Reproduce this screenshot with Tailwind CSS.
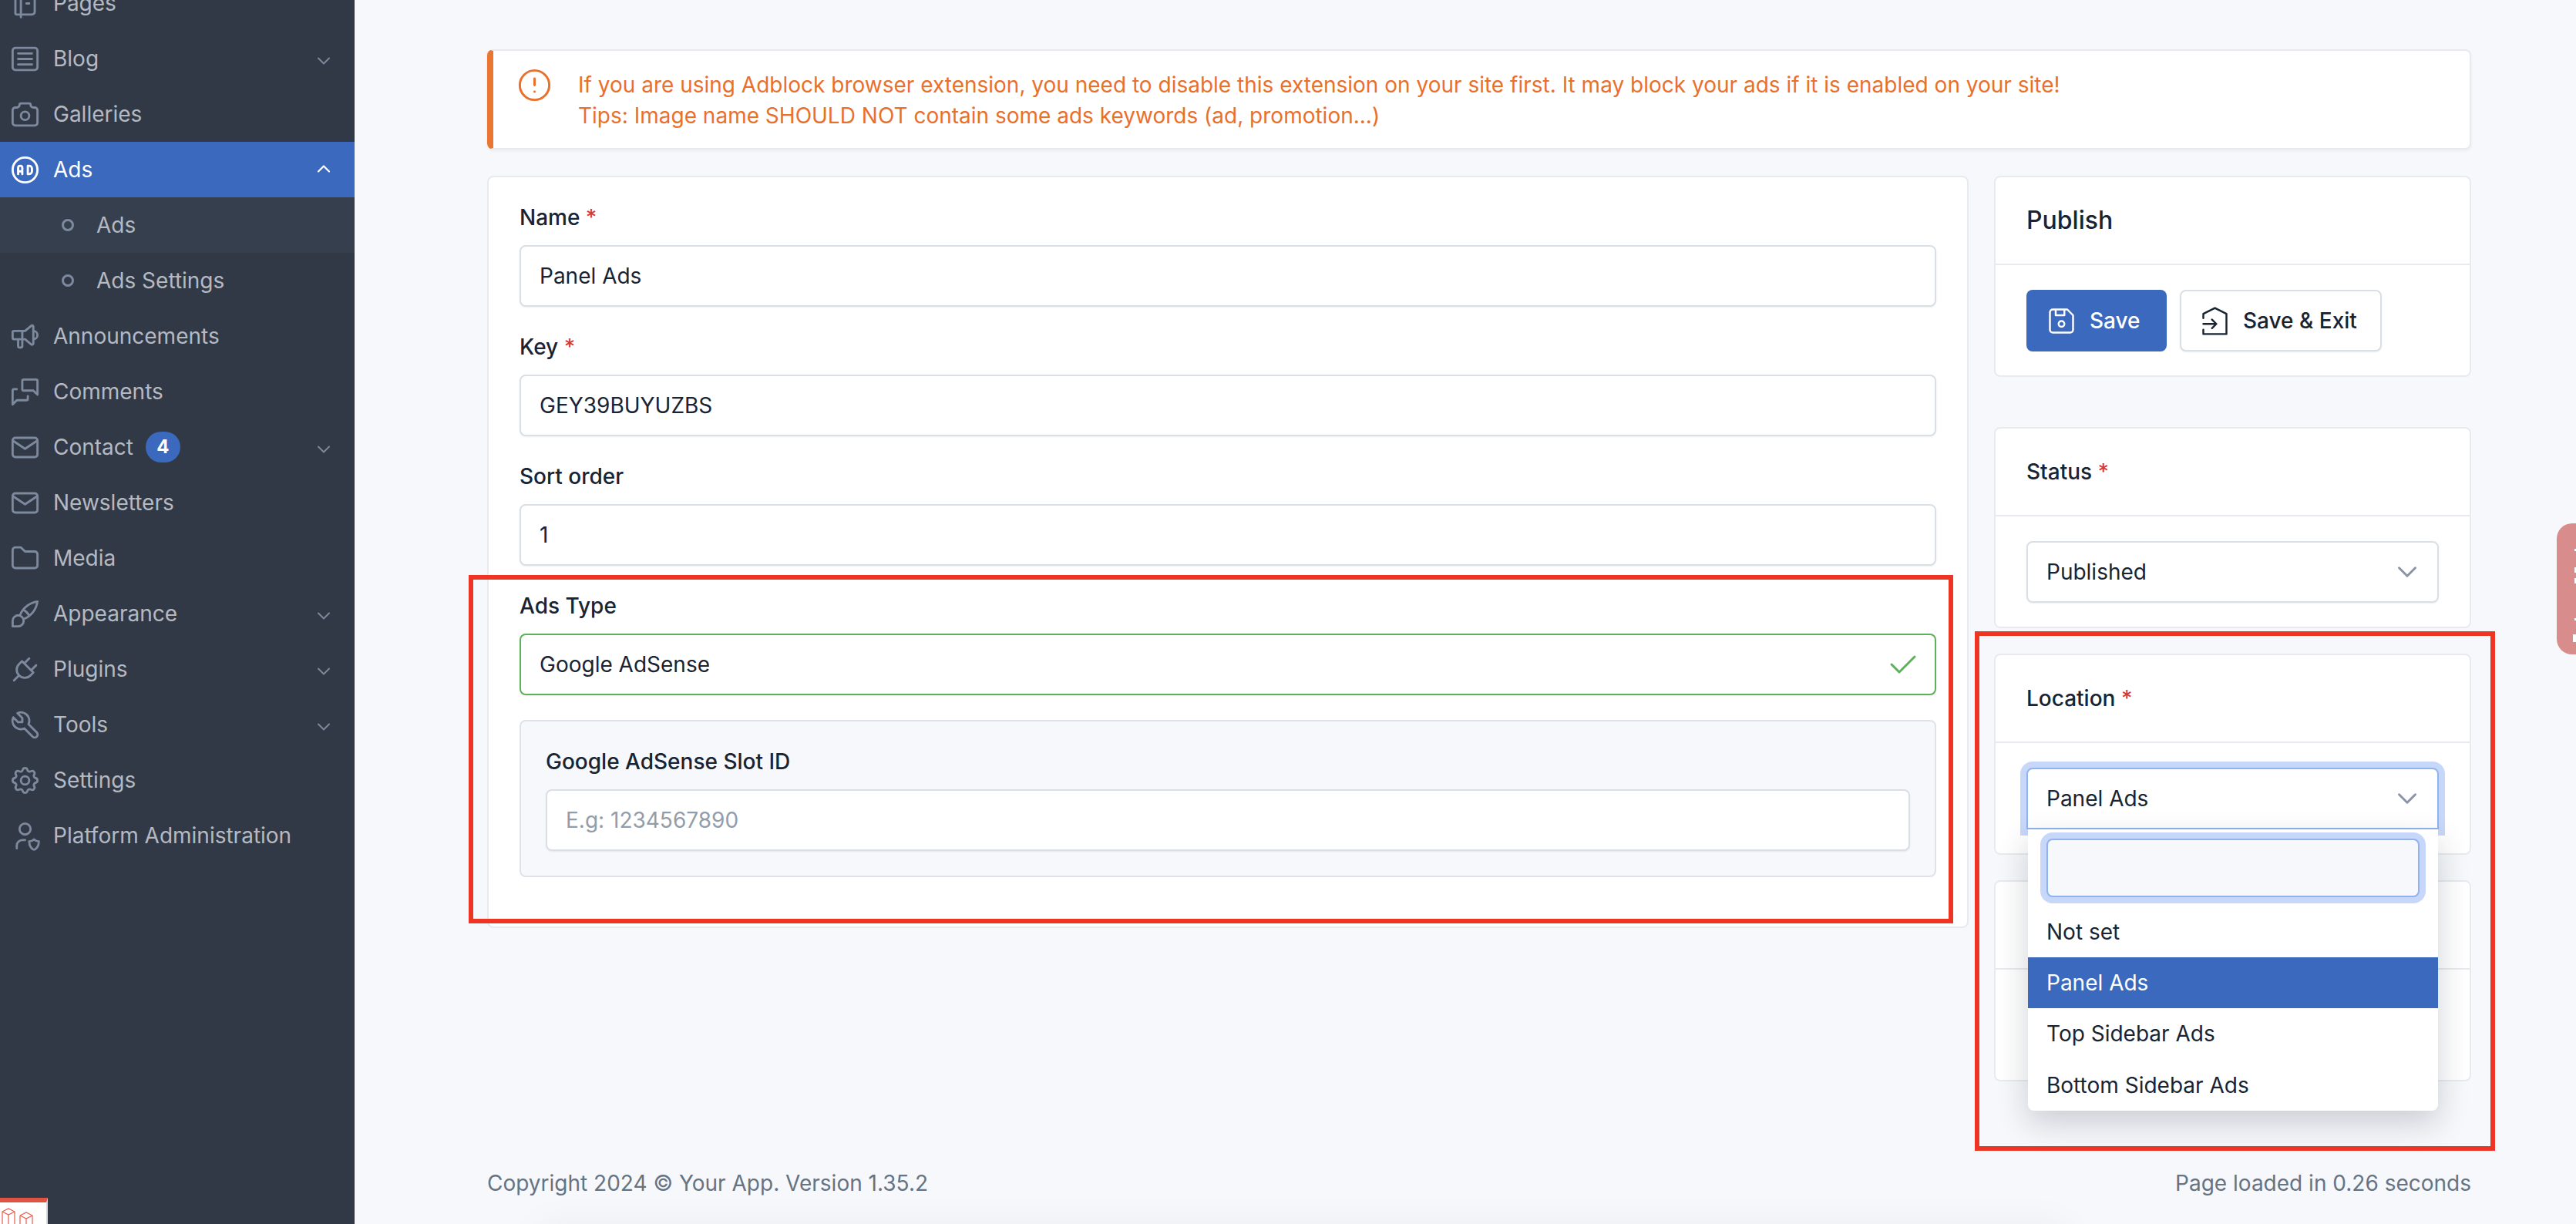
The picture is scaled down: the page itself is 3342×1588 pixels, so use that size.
<!DOCTYPE html>
<html lang="en">
<head>
  <meta charset="UTF-8" />
  <title>Ads</title>
  <script src="https://cdn.jsdelivr.net/npm/@tailwindcss/browser@4"></script>
</head>
<body class="bg-[#f6f8fb]">
<div class="relative flex w-[3342px] h-[1588px] overflow-hidden font-[Inter,sans-serif] text-[28px] leading-[40px] text-[#182433]">

  <!-- Sidebar -->
  <aside class="w-[460px] shrink-0 bg-[#313947] text-[#b5b9c1]">
    <nav class="-mt-[32px] flex flex-col">
      <a class="flex items-center h-[72px] pl-[11px] gap-[15px]">
        <svg class="w-[43px] h-[43px] shrink-0 text-[#7d899d]" viewBox="0 0 24 24" fill="none" stroke="currentColor" stroke-width="1.6" stroke-linecap="round" stroke-linejoin="round"><path d="M6 4h11a2 2 0 0 1 2 2v12a2 2 0 0 1 -2 2h-11a1 1 0 0 1 -1 -1v-14a1 1 0 0 1 1 -1m3 0v18M13 8l2 0M13 12l2 0"/></svg>
        <span>Pages</span>
      </a>
      <a class="flex items-center h-[72px] pl-[11px] gap-[15px]">
        <svg class="w-[43px] h-[43px] shrink-0 text-[#7d899d]" viewBox="0 0 24 24" fill="none" stroke="currentColor" stroke-width="1.6" stroke-linecap="round" stroke-linejoin="round"><path d="M3 6a2 2 0 0 1 2 -2h14a2 2 0 0 1 2 2v12a2 2 0 0 1 -2 2h-14a2 2 0 0 1 -2 -2zM7 8h10M7 12h10M7 16h10"/></svg>
        <span>Blog</span>
        <svg class="ml-auto mr-[26px] mt-[6px] w-[28px] h-[28px] text-[#7d899d]" viewBox="0 0 24 24" fill="none" stroke="currentColor" stroke-width="1.7" stroke-linecap="round" stroke-linejoin="round"><path d="M6 9l6 6l6 -6"/></svg>
      </a>
      <a class="flex items-center h-[72px] pl-[11px] gap-[15px]">
        <svg class="w-[43px] h-[43px] shrink-0 text-[#7d899d]" viewBox="0 0 24 24" fill="none" stroke="currentColor" stroke-width="1.6" stroke-linecap="round" stroke-linejoin="round"><path d="M5 7h1a2 2 0 0 0 2 -2a1 1 0 0 1 1 -1h6a1 1 0 0 1 1 1a2 2 0 0 0 2 2h1a2 2 0 0 1 2 2v9a2 2 0 0 1 -2 2h-14a2 2 0 0 1 -2 -2v-9a2 2 0 0 1 2 -2M9 13a3 3 0 1 0 6 0a3 3 0 0 0 -6 0"/></svg>
        <span>Galleries</span>
      </a>
      <a class="flex items-center h-[72px] pl-[11px] gap-[15px] bg-[#3a69bd] text-white">
        <svg class="w-[43px] h-[43px] shrink-0" viewBox="0 0 24 24" fill="none" stroke="currentColor" stroke-width="1.6" stroke-linecap="round" stroke-linejoin="round"><path d="M3 12a9 9 0 1 0 18 0a9 9 0 1 0 -18 0M7 15v-4.5a1.5 1.5 0 0 1 3 0v4.5M7 13h3M14 9v6h1a2 2 0 0 0 2 -2v-2a2 2 0 0 0 -2 -2h-1"/></svg>
        <span>Ads</span>
        <svg class="ml-auto mr-[26px] -mt-[3px] w-[28px] h-[28px]" viewBox="0 0 24 24" fill="none" stroke="currentColor" stroke-width="1.9" stroke-linecap="round" stroke-linejoin="round"><path d="M6 15l6 -6l6 6"/></svg>
      </a>
      <a class="flex items-center h-[72px] pl-[80px] gap-[29px] bg-[#363f4e]">
        <span class="w-[16px] h-[16px] rounded-full border-[3px] border-[#7d899d]"></span>
        <span>Ads</span>
      </a>
      <a class="flex items-center h-[72px] pl-[80px] gap-[29px]">
        <span class="w-[16px] h-[16px] rounded-full border-[3px] border-[#7d899d]"></span>
        <span>Ads Settings</span>
      </a>
      <a class="flex items-center h-[72px] pl-[11px] gap-[15px]">
        <svg class="w-[43px] h-[43px] shrink-0 text-[#7d899d]" viewBox="0 0 24 24" fill="none" stroke="currentColor" stroke-width="1.6" stroke-linecap="round" stroke-linejoin="round"><path d="M18 8a3 3 0 0 1 0 6M10 8v11a1 1 0 0 1 -1 1h-1a1 1 0 0 1 -1 -1v-5M12 8h0l4.524 -3.77a.9 .9 0 0 1 1.476 .692v12.156a.9 .9 0 0 1 -1.476 .692l-4.524 -3.77h-8a1 1 0 0 1 -1 -1v-4a1 1 0 0 1 1 -1h8"/></svg>
        <span>Announcements</span>
      </a>
      <a class="flex items-center h-[72px] pl-[11px] gap-[15px]">
        <svg class="w-[43px] h-[43px] shrink-0 text-[#7d899d]" viewBox="0 0 24 24" fill="none" stroke="currentColor" stroke-width="1.6" stroke-linecap="round" stroke-linejoin="round"><path d="M21 14l-3 -3h-7a1 1 0 0 1 -1 -1v-6a1 1 0 0 1 1 -1h9a1 1 0 0 1 1 1v10M14 15v2a1 1 0 0 1 -1 1h-7l-3 3v-10a1 1 0 0 1 1 -1h2"/></svg>
        <span>Comments</span>
      </a>
      <a class="flex items-center h-[72px] pl-[11px] gap-[15px]">
        <svg class="w-[43px] h-[43px] shrink-0 text-[#7d899d]" viewBox="0 0 24 24" fill="none" stroke="currentColor" stroke-width="1.6" stroke-linecap="round" stroke-linejoin="round"><path d="M3 7a2 2 0 0 1 2 -2h14a2 2 0 0 1 2 2v10a2 2 0 0 1 -2 2h-14a2 2 0 0 1 -2 -2zM3 7l9 6l9 -6"/></svg>
        <span>Contact</span>
        <span class="ml-[1px] w-[45px] h-[40px] rounded-full bg-[#3a69bd] text-white text-[24px] font-bold flex items-center justify-center">4</span>
        <svg class="ml-auto mr-[26px] mt-[6px] w-[28px] h-[28px] text-[#7d899d]" viewBox="0 0 24 24" fill="none" stroke="currentColor" stroke-width="1.7" stroke-linecap="round" stroke-linejoin="round"><path d="M6 9l6 6l6 -6"/></svg>
      </a>
      <a class="flex items-center h-[72px] pl-[11px] gap-[15px]">
        <svg class="w-[43px] h-[43px] shrink-0 text-[#7d899d]" viewBox="0 0 24 24" fill="none" stroke="currentColor" stroke-width="1.6" stroke-linecap="round" stroke-linejoin="round"><path d="M3 7a2 2 0 0 1 2 -2h14a2 2 0 0 1 2 2v10a2 2 0 0 1 -2 2h-14a2 2 0 0 1 -2 -2zM3 7l9 6l9 -6"/></svg>
        <span>Newsletters</span>
      </a>
      <a class="flex items-center h-[72px] pl-[11px] gap-[15px]">
        <svg class="w-[43px] h-[43px] shrink-0 text-[#7d899d]" viewBox="0 0 24 24" fill="none" stroke="currentColor" stroke-width="1.6" stroke-linecap="round" stroke-linejoin="round"><path d="M5 4h4l3 3h7a2 2 0 0 1 2 2v8a2 2 0 0 1 -2 2h-14a2 2 0 0 1 -2 -2v-11a2 2 0 0 1 2 -2"/></svg>
        <span>Media</span>
      </a>
      <a class="flex items-center h-[72px] pl-[11px] gap-[15px]">
        <svg class="w-[43px] h-[43px] shrink-0 text-[#7d899d]" viewBox="0 0 24 24" fill="none" stroke="currentColor" stroke-width="1.6" stroke-linecap="round" stroke-linejoin="round"><path d="M3 21v-4a4 4 0 1 1 4 4h-4M21 3a16 16 0 0 0 -12.8 10.2M21 3a16 16 0 0 1 -10.2 12.8M10.6 9a9 9 0 0 1 4.4 4.4"/></svg>
        <span>Appearance</span>
        <svg class="ml-auto mr-[26px] mt-[6px] w-[28px] h-[28px] text-[#7d899d]" viewBox="0 0 24 24" fill="none" stroke="currentColor" stroke-width="1.7" stroke-linecap="round" stroke-linejoin="round"><path d="M6 9l6 6l6 -6"/></svg>
      </a>
      <a class="flex items-center h-[72px] pl-[11px] gap-[15px]">
        <svg class="w-[43px] h-[43px] shrink-0 text-[#7d899d]" viewBox="0 0 24 24" fill="none" stroke="currentColor" stroke-width="1.6" stroke-linecap="round" stroke-linejoin="round"><path d="M9.785 6l8.215 8.215l-2.054 2.054a5.81 5.81 0 1 1 -8.215 -8.215l2.054 -2.054zM4 20l3.5 -3.5M15 4l-3.5 3.5M20 9l-3.5 3.5"/></svg>
        <span>Plugins</span>
        <svg class="ml-auto mr-[26px] mt-[6px] w-[28px] h-[28px] text-[#7d899d]" viewBox="0 0 24 24" fill="none" stroke="currentColor" stroke-width="1.7" stroke-linecap="round" stroke-linejoin="round"><path d="M6 9l6 6l6 -6"/></svg>
      </a>
      <a class="flex items-center h-[72px] pl-[11px] gap-[15px]">
        <svg class="w-[43px] h-[43px] shrink-0 text-[#7d899d]" viewBox="0 0 24 24" fill="none" stroke="currentColor" stroke-width="1.6" stroke-linecap="round" stroke-linejoin="round"><path d="M7 10h3v-3l-3.5 -3.5a6 6 0 0 1 8 8l6 6a2 2 0 0 1 -3 3l-6 -6a6 6 0 0 1 -8 -8l3.5 3.5"/></svg>
        <span>Tools</span>
        <svg class="ml-auto mr-[26px] mt-[6px] w-[28px] h-[28px] text-[#7d899d]" viewBox="0 0 24 24" fill="none" stroke="currentColor" stroke-width="1.7" stroke-linecap="round" stroke-linejoin="round"><path d="M6 9l6 6l6 -6"/></svg>
      </a>
      <a class="flex items-center h-[72px] pl-[11px] gap-[15px]">
        <svg class="w-[43px] h-[43px] shrink-0 text-[#7d899d]" viewBox="0 0 24 24" fill="none" stroke="currentColor" stroke-width="1.6" stroke-linecap="round" stroke-linejoin="round"><path d="M10.325 4.317c.426 -1.756 2.924 -1.756 3.35 0a1.724 1.724 0 0 0 2.573 1.066c1.543 -.94 3.31 .826 2.37 2.37a1.724 1.724 0 0 0 1.065 2.572c1.756 .426 1.756 2.924 0 3.35a1.724 1.724 0 0 0 -1.066 2.573c.94 1.543 -.826 3.31 -2.37 2.37a1.724 1.724 0 0 0 -2.572 1.065c-.426 1.756 -2.924 1.756 -3.35 0a1.724 1.724 0 0 0 -2.573 -1.066c-1.543 .94 -3.31 -.826 -2.37 -2.37a1.724 1.724 0 0 0 -1.065 -2.572c-1.756 -.426 -1.756 -2.924 0 -3.35a1.724 1.724 0 0 0 1.066 -2.573c-.94 -1.543 .826 -3.31 2.37 -2.37c1 .608 2.296 .07 2.572 -1.065zM9 12a3 3 0 1 0 6 0a3 3 0 0 0 -6 0"/></svg>
        <span>Settings</span>
      </a>
      <a class="flex items-center h-[72px] pl-[11px] gap-[15px]">
        <svg class="w-[43px] h-[43px] shrink-0 text-[#7d899d]" viewBox="0 0 24 24" fill="none" stroke="currentColor" stroke-width="1.6" stroke-linecap="round" stroke-linejoin="round"><path d="M6 21v-2a4 4 0 0 1 4 -4h2M22 16c0 4 -2.5 6 -3.5 6s-3.5 -2 -3.5 -6c1 0 2.5 -.5 3.5 -1.5c1 1 2.5 1.5 3.5 1.5zM8 7a4 4 0 1 0 8 0a4 4 0 0 0 -8 0"/></svg>
        <span>Platform Administration</span>
      </a>
    </nav>
  </aside>

  <!-- Main -->
  <main class="flex-1 flex flex-col pl-[172px] pr-[136px] pt-[64px]">
    <!-- Alert -->
    <div class="flex h-[130px] mb-[34px] bg-white border-2 border-[#e8eaef] border-l-[8px] border-l-[#ea7631] rounded-lg shadow-[0_2px_4px_rgba(24,36,51,.05)] text-[#e9702b]">
      <svg class="ml-[28px] mt-[19px] w-[51px] h-[51px] shrink-0" viewBox="0 0 24 24" fill="none" stroke="currentColor" stroke-width="1.4" stroke-linecap="round" stroke-linejoin="round"><path d="M3 12a9 9 0 1 0 18 0a9 9 0 0 0 -18 0M12 8v4M12 16h.01"/></svg>
      <p class="ml-[31px] pt-[24px]">If you are using Adblock browser extension, you need to disable this extension on your site first. It may block your ads if it is enabled on your site!<br>Tips: Image name SHOULD NOT contain some ads keywords (ad, promotion...)</p>
    </div>

    <div class="flex gap-[33px] items-start">
      <!-- Form card -->
      <section class="w-[1922px] bg-white border-2 border-[#e8eaef] rounded-lg px-[40px] pt-[32px] pb-[32px]">
        <label class="block font-medium h-[40px] mb-[16px]">Name <span class="text-[#d63939]">*</span></label>
        <input class="block w-full h-[80px] mb-[32px] px-[24px] border-2 border-[#dadfe5] rounded-lg shadow-[0_1px_2px_rgba(24,36,51,.08)] bg-white" value="Panel Ads">
        <label class="block font-medium h-[40px] mb-[16px]">Key <span class="text-[#d63939]">*</span></label>
        <input class="block w-full h-[80px] mb-[32px] px-[24px] border-2 border-[#dadfe5] rounded-lg shadow-[0_1px_2px_rgba(24,36,51,.08)] bg-white" value="GEY39BUYUZBS">
        <label class="block font-medium h-[40px] mb-[16px]">Sort order</label>
        <input class="block w-full h-[80px] mb-[32px] px-[24px] border-2 border-[#dadfe5] rounded-lg shadow-[0_1px_2px_rgba(24,36,51,.08)] bg-white" value="1">
        <label class="block font-medium h-[40px] mb-[16px]">Ads Type</label>
        <div class="flex items-center justify-between h-[80px] mb-[32px] pl-[24px] pr-[18px] border-2 border-[#5eb15a] rounded-lg bg-white shadow-[0_1px_2px_rgba(24,36,51,.08)]">
          <span>Google AdSense</span>
          <svg class="w-[48px] h-[48px] text-[#5eb15a]" viewBox="0 0 24 24" fill="none" stroke="currentColor" stroke-width="1.5" stroke-linecap="round" stroke-linejoin="round"><path d="M5 12l5 5l10 -10"/></svg>
        </div>
        <div class="mb-[32px] p-[32px] bg-[#f6f8fb] border-2 border-[#dfe3e9] rounded-lg">
          <label class="block font-medium h-[40px] mb-[16px]">Google AdSense Slot ID</label>
          <input class="block w-full h-[80px] px-[24px] border-2 border-[#dadfe5] rounded-lg shadow-[0_1px_2px_rgba(24,36,51,.08)] bg-white placeholder:text-[#929dab]" placeholder="E.g: 1234567890">
        </div>
      </section>

      <!-- Right column -->
      <div class="w-[619px] flex flex-col">
        <section class="bg-white border-2 border-[#e8eaef] rounded-lg mb-[65px]">
          <div class="h-[114px] flex items-center px-[40px] border-b-2 border-[#e8eaef] text-[32px] font-medium">Publish</div>
          <div class="flex gap-[17px] px-[40px] pt-[32px] pb-[31px]">
            <button class="flex items-center h-[80px] w-[182px] pl-[23px] gap-[14px] rounded-lg bg-[#3a69bd] text-white font-medium">
              <svg class="w-[45px] h-[45px] shrink-0" viewBox="0 0 24 24" fill="none" stroke="currentColor" stroke-width="1.3" stroke-linecap="round" stroke-linejoin="round"><path d="M6 4h10l4 4v10a2 2 0 0 1 -2 2h-12a2 2 0 0 1 -2 -2v-12a2 2 0 0 1 2 -2M10 14a2 2 0 1 0 4 0a2 2 0 1 0 -4 0M14 4l0 4l-6 0l0 -4"/></svg>
              <span>Save</span>
            </button>
            <button class="flex items-center h-[80px] w-[262px] pl-[21px] gap-[14px] rounded-lg bg-white border-2 border-[#dadfe5] shadow-[0_1px_2px_rgba(24,36,51,.08)] font-medium">
              <svg class="w-[45px] h-[45px] shrink-0" viewBox="0 0 24 24" fill="none" stroke="currentColor" stroke-width="1.3" stroke-linecap="round" stroke-linejoin="round"><path d="M4 18v3h16v-14l-8 -4l-8 4v3M4 14h9M10 11l3 3l-3 3"/></svg>
              <span>Save &amp; Exit</span>
            </button>
          </div>
        </section>

        <section class="bg-white border-2 border-[#e8eaef] rounded-lg mb-[33px]">
          <div class="h-[114px] flex items-center px-[40px] border-b-2 border-[#e8eaef] font-medium"><span>Status <span class="text-[#d63939]">*</span></span></div>
          <div class="px-[40px] pt-[32px] pb-[31px]">
            <div class="flex items-center justify-between h-[80px] pl-[24px] pr-[18px] border-2 border-[#dadfe5] rounded-lg shadow-[0_1px_2px_rgba(24,36,51,.08)]">
              <span>Published</span>
              <svg class="w-[42px] h-[42px] text-[#8a94a6]" viewBox="0 0 24 24" fill="none" stroke="currentColor" stroke-width="1.7" stroke-linecap="round" stroke-linejoin="round"><path d="M6 9l6 6l6 -6"/></svg>
            </div>
          </div>
        </section>

        <section class="bg-white border-2 border-[#e8eaef] rounded-lg mb-[33px]">
          <div class="h-[114px] flex items-center px-[40px] border-b-2 border-[#e8eaef] font-medium"><span>Location <span class="text-[#d63939]">*</span></span></div>
          <div class="px-[40px] pt-[32px] pb-[31px]">
            <div class="relative">
              <div class="flex items-center justify-between h-[80px] pl-[24px] pr-[18px] border-2 border-[#8fb3ef] rounded-t-lg bg-white shadow-[0_0_0_8px_#c7d7f9]">
                <span>Panel Ads</span>
                <svg class="w-[42px] h-[42px] text-[#8a94a6]" viewBox="0 0 24 24" fill="none" stroke="currentColor" stroke-width="1.7" stroke-linecap="round" stroke-linejoin="round"><path d="M6 9l6 6l6 -6"/></svg>
              </div>
              <!-- Open dropdown -->
              <div class="absolute z-10 left-[2px] right-[1px] top-[80px] bg-white rounded-b-lg shadow-[0_16px_40px_rgba(24,36,51,.2)]">
                <div class="px-[24px] pt-[12px] pb-[12px]">
                  <input class="block w-full h-[76px] px-[24px] border-2 border-[#8fb3ef] rounded-lg bg-[#f6f8fb] shadow-[0_0_0_8px_#c7d7f9]">
                </div>
                <div class="flex items-center h-[66px] px-[24px]">Not set</div>
                <div class="flex items-center h-[66px] px-[24px] bg-[#3a69bd] text-white">Panel Ads</div>
                <div class="flex items-center h-[66px] px-[24px]">Top Sidebar Ads</div>
                <div class="flex items-center h-[67px] px-[24px]">Bottom Sidebar Ads</div>
              </div>
            </div>
          </div>
        </section>

        <!-- Card behind the dropdown -->
        <section class="bg-white border-2 border-[#e8eaef] rounded-lg h-[261px]">
          <div class="h-[114px] border-b-2 border-[#e8eaef]"></div>
        </section>
      </div>
    </div>

    <footer class="mt-auto h-[73px] flex justify-between text-[#667382]">
      <span>Copyright 2024 © Your App. Version 1.35.2</span>
      <span>Page loaded in 0.26 seconds</span>
    </footer>
  </main>

  <!-- Annotation boxes from the screenshot -->
  <div class="absolute z-20 left-[608px] top-[746px] w-[1926px] h-[452px] border-[6px] border-[#ee3524]"></div>
  <div class="absolute z-20 left-[2562px] top-[819px] w-[675px] h-[674px] border-[6px] border-[#ee3524]"></div>

  <!-- Floating tab, right edge -->
  <div class="absolute right-0 top-[679px] w-[25px] h-[170px] rounded-l-[20px] bg-[#d98c8c]">
    <span class="absolute left-[23px] top-[33px] w-[2px] h-[3px] bg-white"></span>
    <span class="absolute left-[23px] top-[57px] w-[2px] h-[7px] bg-white"></span>
    <span class="absolute left-[23px] top-[71px] w-[2px] h-[7px] bg-white"></span>
    <span class="absolute left-[23px] top-[123px] w-[2px] h-[3px] bg-white"></span>
    <span class="absolute left-[21px] top-[144px] w-[4px] h-[10px] bg-white"></span>
  </div>

  <!-- Widget, bottom left -->
  <div class="absolute left-0 top-[1554px] w-[62px] h-[34px] bg-white border-t-[6px] border-t-[#df5440] border-r-2 border-r-[#d9d9d9] overflow-hidden">
    <svg class="block w-[60px] h-[28px]" viewBox="0 0 60 28" fill="none" stroke="#ea5a4c" stroke-width="1.2"><path d="M3 12l8 -4l8 4v20M3 12v20M3 12l8 4l8 -4M11 16v16"/><path d="M26 17l8 -4l8 4v15M26 17v15M26 17l8 4l8 -4M34 21v11"/></svg>
  </div>

  <!-- Soft shadow at the bottom edge -->
  <div class="absolute left-[720px] top-[1610px] w-[1940px] h-[40px] shadow-[0_0_50px_20px_rgba(24,36,51,.05)]"></div>
</div>
</body>
</html>
